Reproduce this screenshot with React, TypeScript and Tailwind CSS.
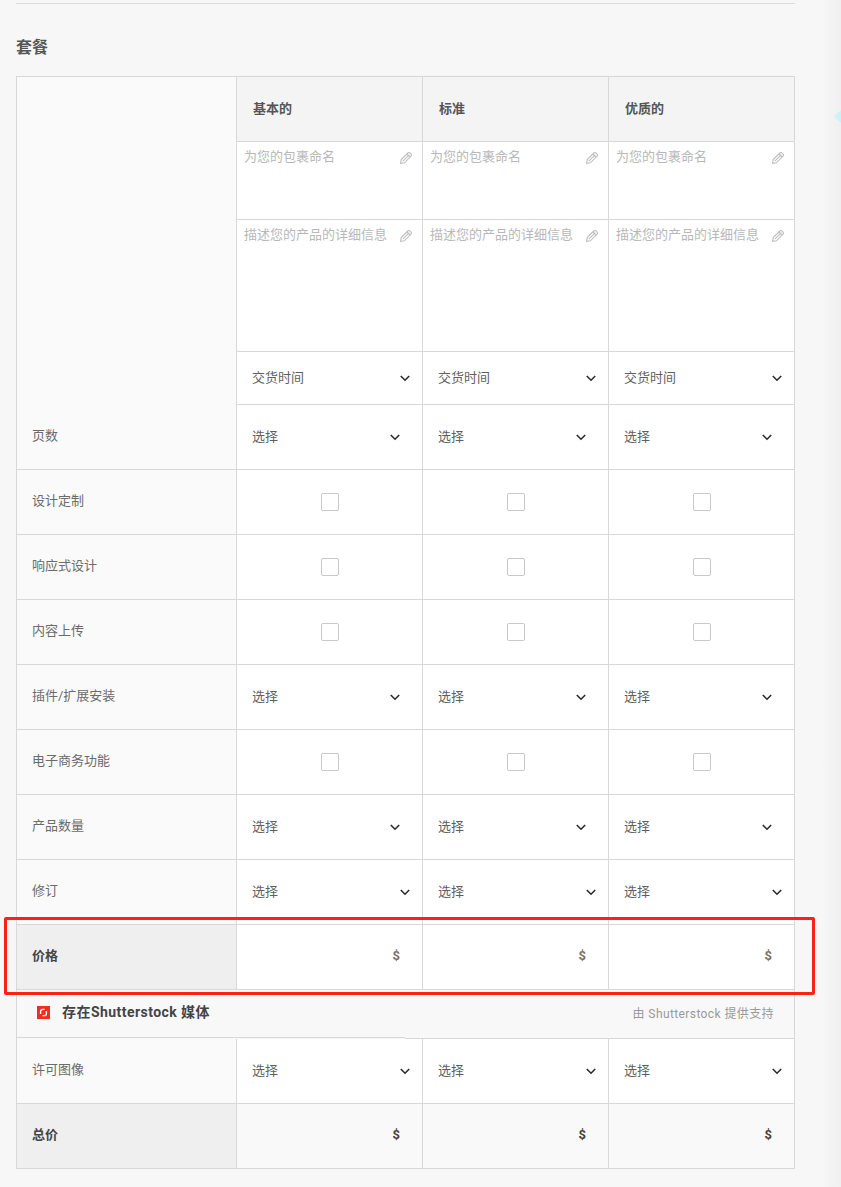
const font = "font-['Roboto','Noto_Sans_CJK_SC',sans-serif]"

function PencilIcon() {
  return (
    <svg viewBox="0 0 12 12" className="h-3 w-3 shrink-0" fill="none" stroke="#bfbfbf" strokeWidth="1.1">
      <path d="M0.6 11.4 L1.2 7.6 L7.8 1 Q8.8 0 9.9 0.9 L11.1 2.1 Q12 3.2 11 4.2 L4.4 10.8 Z" />
      <path d="M2.8 9.2 L9.4 2.6 M6.8 2 L10 5.2" />
    </svg>
  )
}

function Chevron() {
  return (
    <svg viewBox="0 0 10 7" className="h-[7px] w-[10px] shrink-0" fill="none" stroke="#2b2b2b" strokeWidth="1.6">
      <path d="M0.8 1 L5 5.2 L9.2 1" />
    </svg>
  )
}

function ShutterstockLogo() {
  return (
    <svg viewBox="0 0 13 13" className="h-[13px] w-[13px] shrink-0">
      <rect width="13" height="13" fill="#ee2e24" />
      <path d="M3.6 8 V5.6 Q3.6 3.4 5.8 3.4 H7.6" fill="none" stroke="#fff" strokeWidth="1.4" />
      <path d="M9.4 5 V7.4 Q9.4 9.6 7.2 9.6 H5.4" fill="none" stroke="#fff" strokeWidth="1.4" />
    </svg>
  )
}

function HeaderCell({ label }: { label: string }) {
  return (
    <div className="flex h-[65px] items-center border-r border-b border-[#d8d8d8] bg-[#f4f4f4] pl-4 text-[13px] font-bold text-[#555]">
      {label}
    </div>
  )
}

function EditCell({ text, height }: { text: string; height: string }) {
  return (
    <div className={`flex items-start justify-between border-r border-b border-[#d8d8d8] bg-white pt-[5px] pr-[10px] pl-[7px] text-[13px] leading-[20px] text-[#b8b8b8] ${height}`}>
      <span>{text}</span>
      <span className="mt-[5px]"><PencilIcon /></span>
    </div>
  )
}

function SelectCell({ text, wide, height = "h-[65px]" }: { text: string; wide?: boolean; height?: string }) {
  return (
    <div className={`flex items-center justify-between border-r border-b border-[#d8d8d8] bg-white pl-[15px] text-[13px] text-[#5f5f5f] ${wide ? "pr-[12px]" : "pr-[22px]"} ${height}`}>
      <span>{text}</span>
      <Chevron />
    </div>
  )
}

function CheckCell() {
  return (
    <div className="flex h-[65px] items-center justify-center border-r border-b border-[#d8d8d8] bg-white">
      <span className="h-[18px] w-[18px] rounded-[2px] border border-[#c8c8c8] bg-white" />
    </div>
  )
}

function PriceCell({ dark }: { dark?: boolean }) {
  return (
    <div className={`flex h-[65px] items-center justify-end border-r border-b border-[#d8d8d8] pr-[22px] pb-[2px] text-[13px] font-bold ${dark ? "bg-[#f9f9f9] text-[#4a4038]" : "bg-white text-[#7a7068]"}`}>
      $
    </div>
  )
}

function Label({ text, strong }: { text: string; strong?: boolean }) {
  return (
    <div className={`flex h-[65px] items-center border-r border-b border-l border-[#d8d8d8] pb-[2px] pl-[15px] text-[13px] ${strong ? "bg-[#efefef] font-bold text-[#444]" : "bg-[#fafafa] text-[#6b6b6b]"}`}>
      {text}
    </div>
  )
}

function Row({ label, kind, wide }: { label: string; kind: "select" | "check"; wide?: boolean }) {
  return (
    <>
      <Label text={label} />
      {[0, 1, 2].map((i) =>
        kind === "check" ? <CheckCell key={i} /> : <SelectCell key={i} text="选择" wide={wide} />
      )}
    </>
  )
}

export default function App() {
  return (
    <div className={`relative h-[1187px] w-[841px] overflow-hidden bg-[#f7f7f7] pt-[3px] pl-4 ${font}`}>
      <div className="w-[779px] border-t border-[#dcdcdc]" />
      <h2 className="mt-[33px] mb-[18px] text-[16px] leading-[21px] font-bold text-[#555]">套餐</h2>

      <div className="grid w-[779px] grid-cols-[221px_186px_186px_186px] border-t border-[#d8d8d8]">
        {/* plan header, name, description and delivery rows share one empty side cell */}
        <div className="row-span-4 border-r border-l border-[#d8d8d8] bg-[#fafafa]" />
        {["基本的", "标准", "优质的"].map((p) => <HeaderCell key={p} label={p} />)}
        {[0, 1, 2].map((i) => <EditCell key={i} text="为您的包裹命名" height="h-[78px]" />)}
        {[0, 1, 2].map((i) => <EditCell key={i} text="描述您的产品的详细信息" height="h-[132px]" />)}
        {[0, 1, 2].map((i) => <SelectCell key={i} text="交货时间" wide height="h-[53px]" />)}

        <Row label="页数" kind="select" />
        <Row label="设计定制" kind="check" />
        <Row label="响应式设计" kind="check" />
        <Row label="内容上传" kind="check" />
        <Row label="插件/扩展安装" kind="select" />
        <Row label="电子商务功能" kind="check" />
        <Row label="产品数量" kind="select" />
        <Row label="修订" kind="select" wide />

        <Label text="价格" strong />
        {[0, 1, 2].map((i) => <PriceCell key={i} />)}

        {/* the bottom rule sits 1px higher under the left part of this strip */}
        <div className="col-span-4 flex h-[49px] items-start border-r border-l border-[#d8d8d8] bg-[#f8f8f8]">
          <div className="flex h-[48px] w-[388px] items-start border-b border-[#d8d8d8] pl-5">
            <div className="mt-[12px] flex items-center gap-3 text-[14px] leading-[20px] font-bold tracking-[0.45px] text-[#444]">
              <ShutterstockLogo />
              存在Shutterstock 媒体
            </div>
          </div>
          <div className="flex h-[49px] flex-1 items-start justify-end border-b border-[#d8d8d8] pr-5">
            <span className="mt-[14px] text-[12px] leading-[20px] tracking-[0.4px] text-[#999]">由 Shutterstock 提供支持</span>
          </div>
        </div>

        <Row label="许可图像" kind="select" wide />

        <Label text="总价" strong />
        {[0, 1, 2].map((i) => <PriceCell key={i} dark />)}
      </div>

      {/* annotation drawn over the price row */}
      <div className="absolute top-[917px] left-[4px] h-[78px] w-[811px] rounded-[2px] border-[3px] border-[#ff2016]" />

      {/* edge of the side panel */}
      <div className="absolute top-0 right-0 h-full w-[20px] bg-gradient-to-r from-[#f7f7f7] to-[#f0f0f0]" />
      <div className="absolute top-[112px] left-[836px] h-[9px] w-[9px] rotate-45 bg-[#c8f3fa]" />
    </div>
  )
}
